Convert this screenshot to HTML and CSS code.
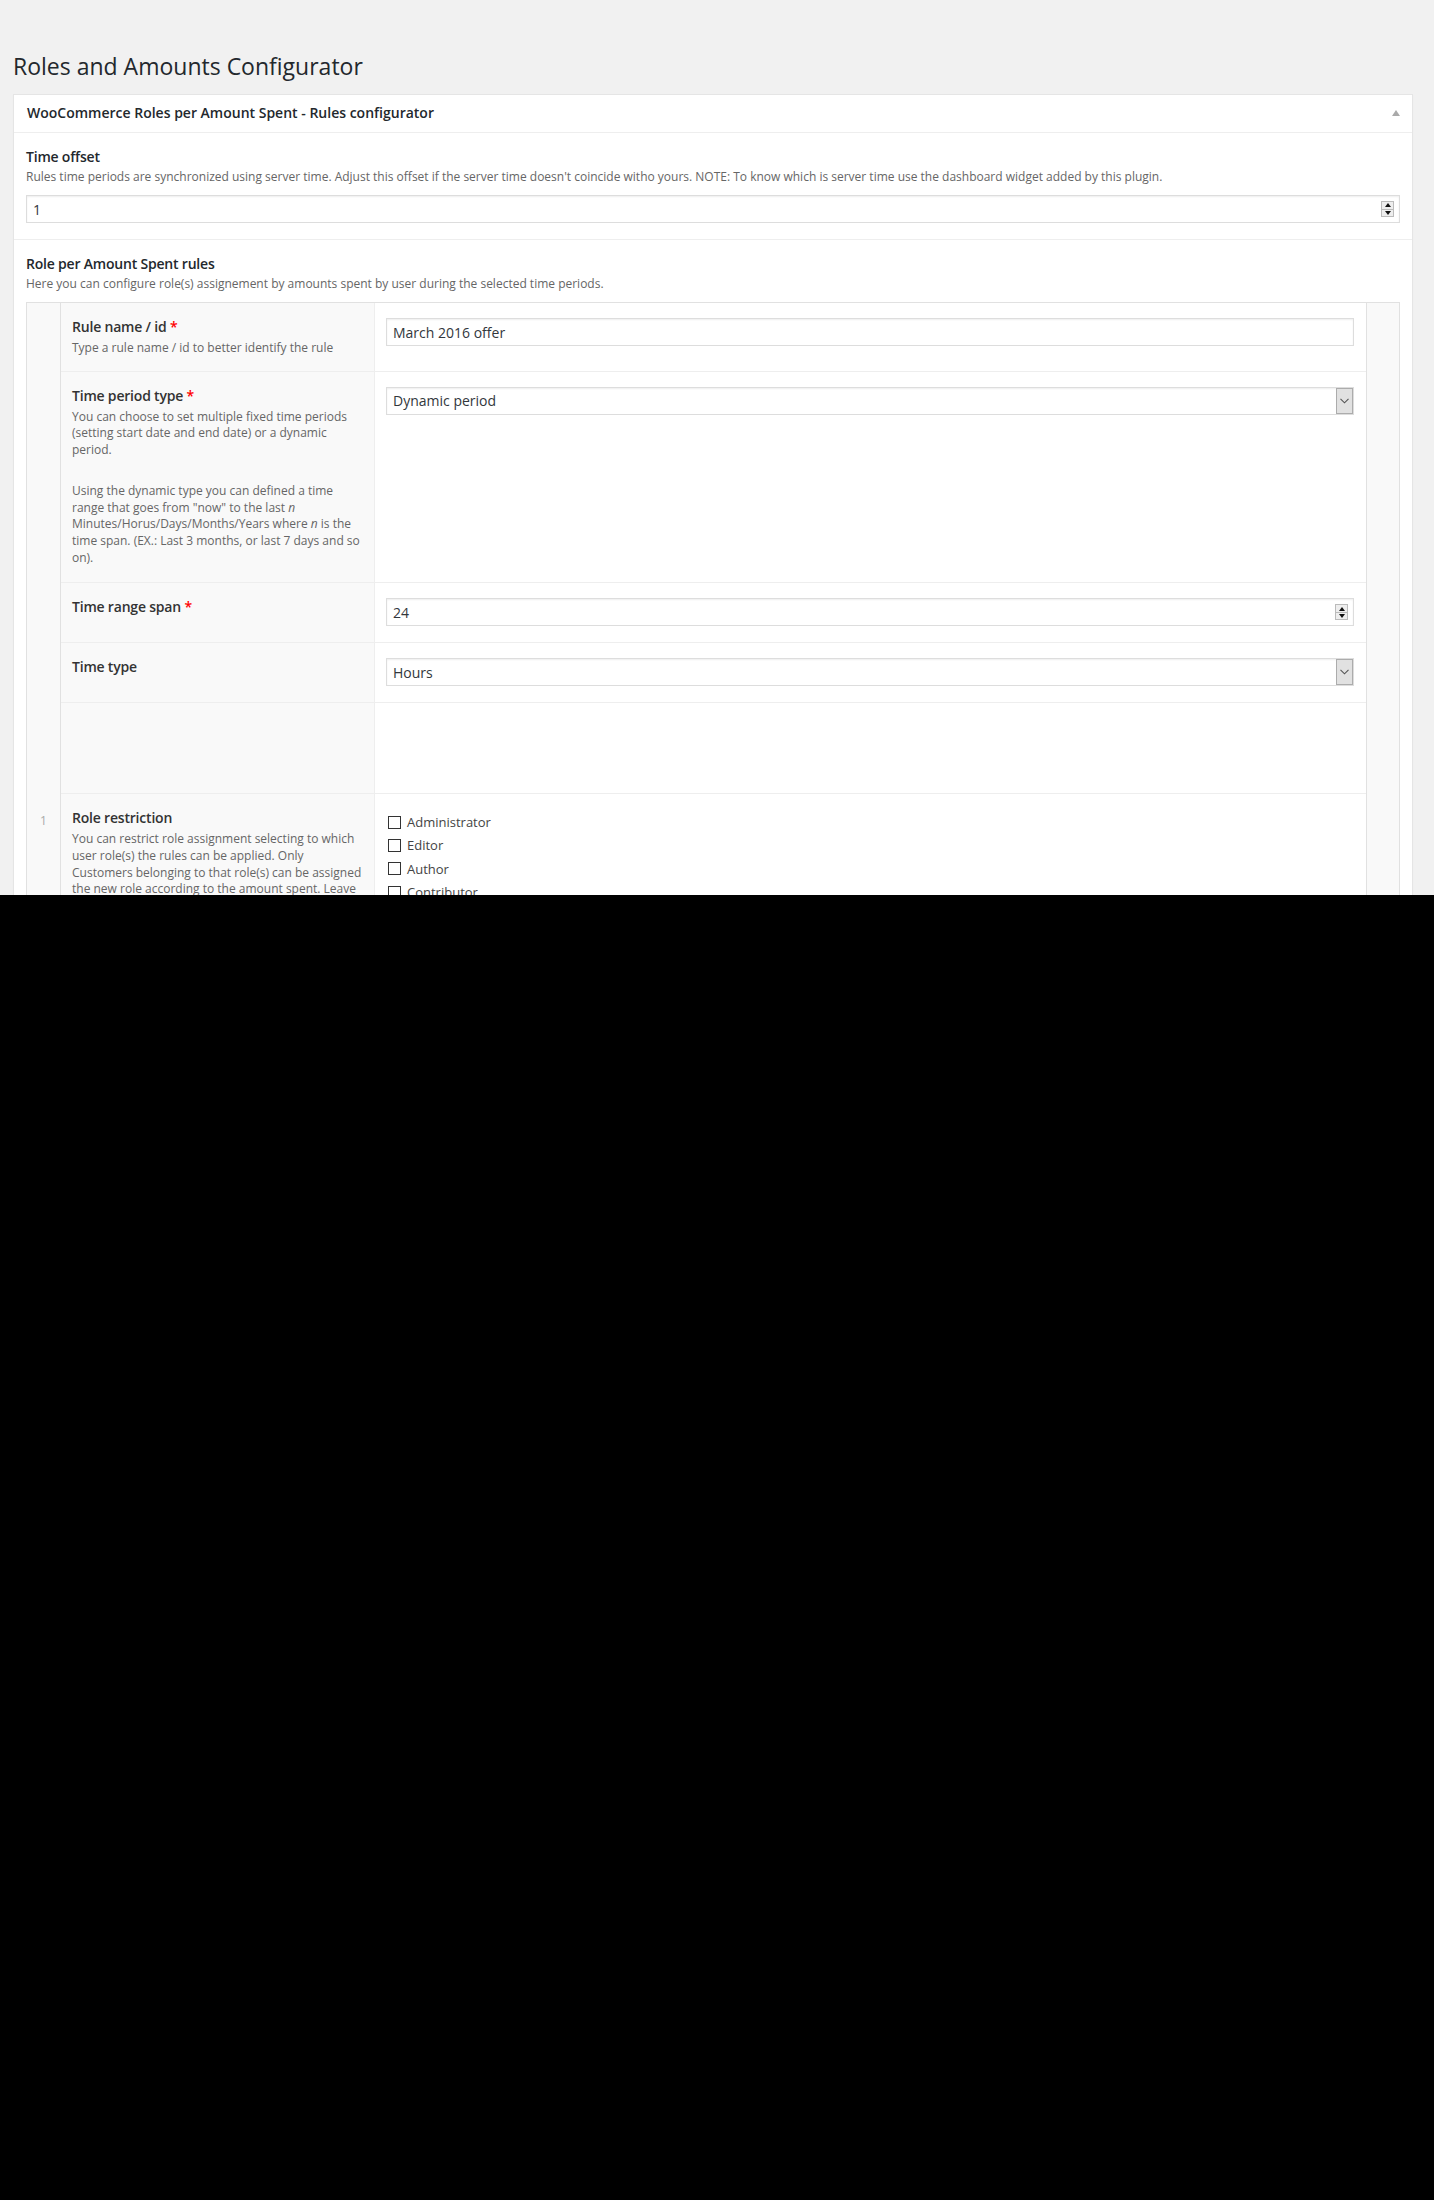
FILE: index.html
```html
<!DOCTYPE html>
<html lang="en">
<head>
<meta charset="utf-8">
<title>Roles and Amounts Configurator</title>
<link rel="stylesheet" href="styles.css">
</head>
<body>
<div class="page">
  <h1 class="title">Roles and Amounts Configurator</h1>
  <div class="postbox">
    <div class="postbox-header">
      <h2 class="postbox-title">WooCommerce Roles per Amount Spent - Rules configurator</h2>
      <span class="toggle-arrow"></span>
    </div>

    <div class="section">
      <div class="sec-label">Time offset</div>
      <p class="sec-desc">Rules time periods are synchronized using server time. Adjust this offset if the server time doesn't coincide witho yours. NOTE: To know which is server time use the dashboard widget added by this plugin.</p>
      <div class="control offset-control">
        <span class="control-value">1</span>
        <span class="spin"><span class="spin-btn spin-up"></span><span class="spin-btn spin-down"></span></span>
      </div>
    </div>

    <div class="section section-last">
      <div class="sec-label">Role per Amount Spent rules</div>
      <p class="sec-desc">Here you can configure role(s) assignement by amounts spent by user during the selected time periods.</p>

      <div class="repeater">
        <div class="rep-index"><span class="rep-num">1</span></div>
        <div class="rep-fields">

          <div class="field">
            <div class="field-label">
              <div class="label">Rule name / id <span class="req">*</span></div>
              <p class="desc">Type a rule name / id to better identify the rule</p>
            </div>
            <div class="field-input">
              <div class="control"><span class="control-value">March 2016 offer</span></div>
            </div>
          </div>

          <div class="field">
            <div class="field-label">
              <div class="label">Time period type <span class="req">*</span></div>
              <p class="desc">You can choose to set multiple fixed time periods (setting start date and end date) or a dynamic period.</p>
              <p class="desc desc-gap">Using the dynamic type you can defined a time range that goes from "now" to the last <em>n</em> Minutes/Horus/Days/Months/Years where <em>n</em> is the time span. (EX.: Last 3 months, or last 7 days and so on).</p>
            </div>
            <div class="field-input">
              <div class="control select">
                <span class="control-value">Dynamic period</span>
                <span class="select-btn"><svg width="9" height="6" viewBox="0 0 9 6"><path d="M0.5 0.8 L4.5 4.8 L8.5 0.8" fill="none" stroke="#555" stroke-width="1.1"/></svg></span>
              </div>
            </div>
          </div>

          <div class="field">
            <div class="field-label">
              <div class="label">Time range span <span class="req">*</span></div>
            </div>
            <div class="field-input">
              <div class="control">
                <span class="control-value">24</span>
                <span class="spin"><span class="spin-btn spin-up"></span><span class="spin-btn spin-down"></span></span>
              </div>
            </div>
          </div>

          <div class="field">
            <div class="field-label">
              <div class="label">Time type</div>
            </div>
            <div class="field-input">
              <div class="control select">
                <span class="control-value">Hours</span>
                <span class="select-btn"><svg width="9" height="6" viewBox="0 0 9 6"><path d="M0.5 0.8 L4.5 4.8 L8.5 0.8" fill="none" stroke="#555" stroke-width="1.1"/></svg></span>
              </div>
            </div>
          </div>

          <div class="field field-empty">
            <div class="field-label"></div>
            <div class="field-input"></div>
          </div>

          <div class="field">
            <div class="field-label">
              <div class="label">Role restriction</div>
              <p class="desc">You can restrict role assignment selecting to which user role(s) the rules can be applied. Only Customers belonging to that role(s) can be assigned the new role according to the amount spent. Leave empty to apply the rule to all the roles.</p>
            </div>
            <div class="field-input">
              <ul class="checklist">
                <li><span class="cbox"></span>Administrator</li>
                <li><span class="cbox"></span>Editor</li>
                <li><span class="cbox"></span>Author</li>
                <li><span class="cbox"></span>Contributor</li>
                <li><span class="cbox"></span>Subscriber</li>
                <li><span class="cbox"></span>Customer</li>
                <li><span class="cbox"></span>Shop Manager</li>
              </ul>
            </div>
          </div>

        </div>
        <div class="rep-actions"></div>
      </div>
    </div>
  </div>
</div>
</body>
</html>
```

FILE: styles.css
```css
html {
  background: #000;
}
body {
  margin: 0;
  font-family: "Open Sans", "Noto Sans", sans-serif;
  color: #444;
}
.page {
  height: 895px;
  overflow: hidden;
  background: #f1f1f1;
  padding-top: 51px;
  box-sizing: border-box;
}
.title {
  margin: 0 0 13px 13px;
  font-size: 23px;
  font-weight: 400;
  line-height: 30px;
  color: #23282d;
}
.postbox {
  margin: 0 21px 0 13px;
  background: #fff;
  border: 1px solid #e5e5e5;
  box-shadow: 0 1px 1px rgba(0,0,0,0.04);
}
.postbox-header {
  height: 36px;
  border-bottom: 1px solid #eee;
  display: flex;
  align-items: center;
  justify-content: space-between;
  padding: 0 12px 1px 13px;
}
.postbox-title {
  margin: 0;
  font-size: 14px;
  font-weight: 600;
  line-height: 20px;
  color: #23282d;
}
.toggle-arrow {
  width: 0;
  height: 0;
  border-left: 4px solid transparent;
  border-right: 4px solid transparent;
  border-bottom: 6px solid #aaa;
}
.section {
  padding: 14px 12px 16px 12px;
  border-bottom: 1px solid #eee;
}
.section-last {
  padding-top: 14px;
  border-bottom: 0;
}
.sec-label {
  font-size: 14px;
  font-weight: 600;
  line-height: 20px;
  color: #23282d;
  letter-spacing: -0.2px;
}
.sec-desc {
  margin: 0;
  font-size: 12px;
  line-height: 20px;
  color: #666;
}
.offset-control {
  margin-top: 8px;
}
.section-last .sec-desc {
  margin-bottom: 8px;
}
.control {
  height: 28px;
  box-sizing: border-box;
  border: 1px solid #ddd;
  box-shadow: inset 0 1px 2px rgba(0,0,0,0.07);
  background: #fff;
  display: flex;
  align-items: center;
  padding: 0 5px 0 6px;
  font-size: 14px;
  color: #32373c;
}
.control-value {
  flex: 1;
}
.spin {
  display: flex;
  flex-direction: column;
  width: 13px;
  height: 16px;
  border: 1px solid #bbb;
  background: #eee;
  box-sizing: border-box;
}
.spin-btn {
  flex: 1;
  display: flex;
  align-items: center;
  justify-content: center;
}
.spin-up {
  border-bottom: 1px solid #bbb;
}
.spin-up::before {
  content: "";
  border-left: 3px solid transparent;
  border-right: 3px solid transparent;
  border-bottom: 4px solid #111;
}
.spin-down::before {
  content: "";
  border-left: 3px solid transparent;
  border-right: 3px solid transparent;
  border-top: 4px solid #111;
}
.select {
  padding-right: 0;
}
.select-btn {
  width: 17px;
  height: 26px;
  box-sizing: border-box;
  background: #e1e1e1;
  border: 1px solid #acacac;
  display: flex;
  align-items: center;
  justify-content: center;
}
.repeater {
  display: flex;
  border: 1px solid #e1e1e1;
  background: #fff;
}
.rep-index {
  width: 33px;
  flex: none;
  background: #f9f9f9;
  border-right: 1px solid #e1e1e1;
  text-align: center;
  padding-top: 508px;
  font-size: 12px;
  line-height: 20px;
  color: #aaa;
}
.rep-fields {
  flex: 1;
  min-width: 0;
}
.rep-actions {
  width: 32px;
  flex: none;
  background: #f9f9f9;
  border-left: 1px solid #e1e1e1;
}
.field {
  display: grid;
  grid-template-columns: 314px 1fr;
  border-top: 1px solid #eee;
}
.field:first-child {
  border-top: 0;
}
.field-label {
  background: #f9f9f9;
  border-right: 1px solid #eee;
  padding: 14px 12px 14px 11px;
}
.field-input {
  padding: 15px 12px 16px 11px;
}
.field-empty {
  min-height: 90px;
}
.label {
  font-size: 14px;
  font-weight: 600;
  line-height: 20px;
  color: #333;
  letter-spacing: -0.2px;
}
.req {
  color: #f00;
}
.desc {
  margin: 3px 0 0 0;
  font-size: 12px;
  line-height: 16.7px;
  color: #666;
}
.desc-gap {
  margin-top: 24px;
  padding-bottom: 2px;
}
.checklist {
  list-style: none;
  margin: 0;
  padding: 1px 0 0 2px;
}
.checklist li {
  display: flex;
  align-items: center;
  height: 23.4px;
  font-size: 13px;
  color: #444;
}
.cbox {
  width: 13px;
  height: 13px;
  box-sizing: border-box;
  border: 1px solid #333;
  background: #fff;
  margin-right: 6px;
}
```
